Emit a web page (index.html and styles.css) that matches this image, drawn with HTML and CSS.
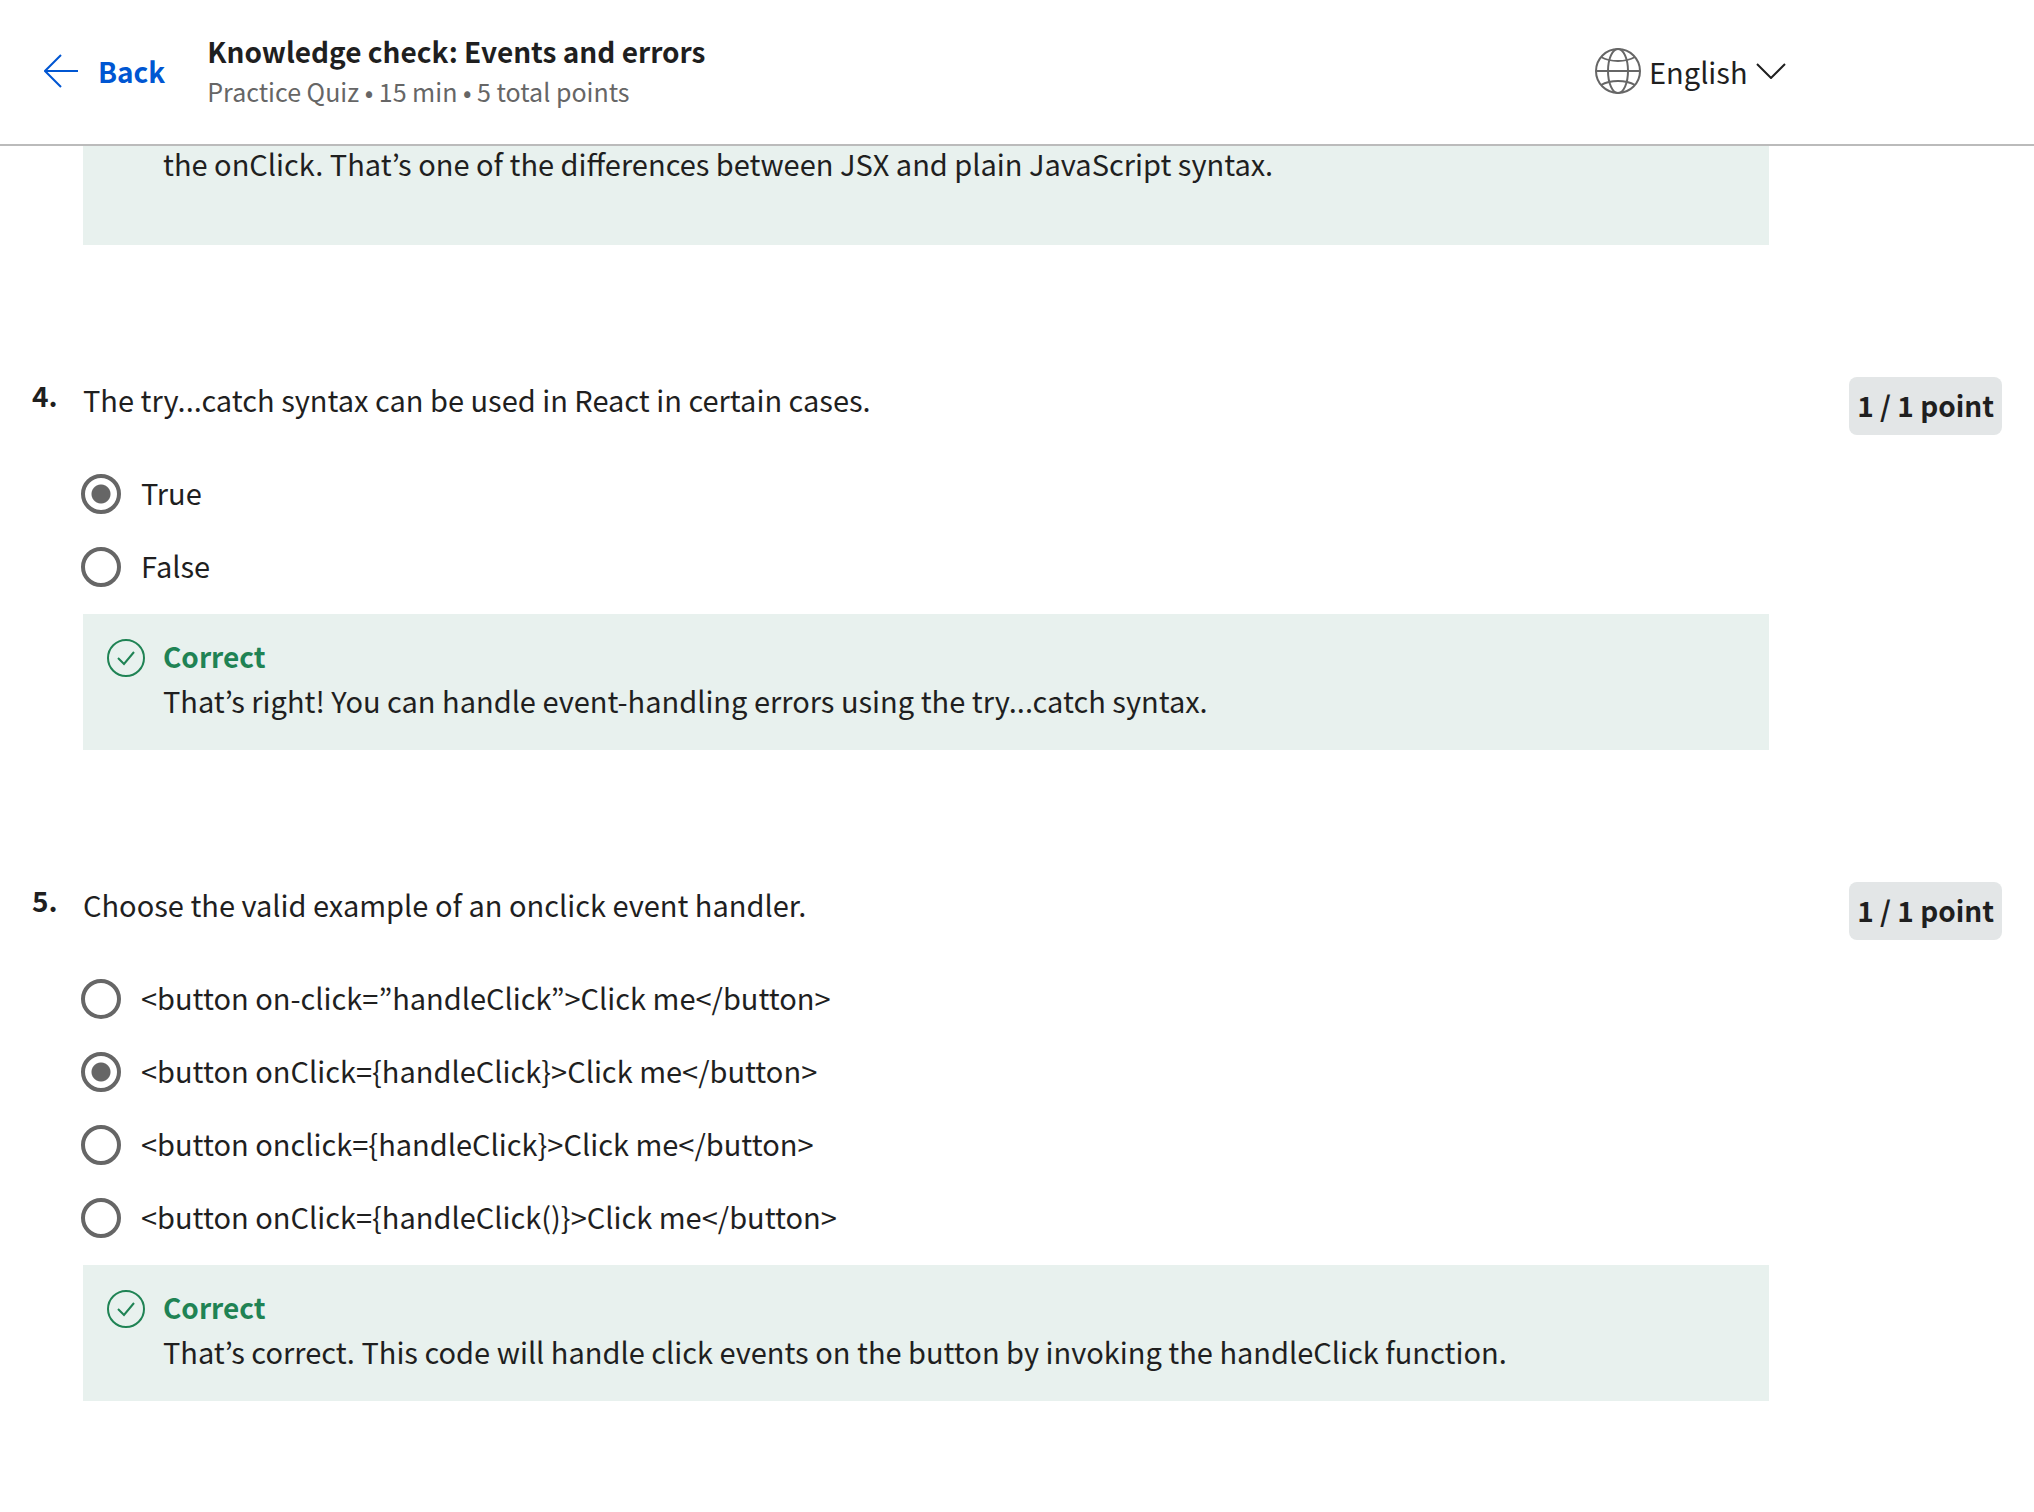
FILE: index.html
```html
<!DOCTYPE html>
<html lang="en">
<head>
<meta charset="utf-8">
<meta name="viewport" content="width=device-width, initial-scale=1">
<title>Knowledge check: Events and errors</title>
<link rel="stylesheet" href="styles.css">
</head>
<body>
<header class="topbar">
  <a class="back" href="#">
    <svg class="back-icon" viewBox="0 0 34 34" aria-hidden="true"><path d="M34 17H2M17 1 1 17l16 16"/></svg>
    Back
  </a>
  <div class="heading">
    <h1 class="title">Knowledge check: Events and errors</h1>
    <p class="meta">Practice Quiz • 15 min • 5 total points</p>
  </div>
  <label class="language">
    <svg class="globe" viewBox="0 0 46 46" aria-hidden="true"><circle cx="23" cy="23" r="22"/><ellipse cx="23" cy="23" rx="10" ry="22"/><path d="M1 23h44M6 9q7 4 17 4t17-4M6 37q7-4 17-4t17 4"/></svg>
    <select class="language-select" aria-label="Language"><option>English</option></select>
    <svg class="chevron" viewBox="0 0 30 16" aria-hidden="true"><path d="M1 1l14 14L29 1"/></svg>
  </label>
</header>
<main class="quiz">
  <section class="question question-previous">
    <div class="feedback feedback-long">
      <p class="feedback-text">the onClick. That’s one of the differences between JSX and plain JavaScript syntax.</p>
    </div>
  </section>

  <section class="question">
    <span class="number">4.</span>
    <p class="prompt" id="q4">The try...catch syntax can be used in React in certain cases.</p>
    <span class="points">1 / 1 point</span>
    <div class="options" role="radiogroup" aria-labelledby="q4">
      <label class="option"><input class="radio" type="radio" name="q4" checked><span class="option-text">True</span></label>
      <label class="option"><input class="radio" type="radio" name="q4"><span class="option-text">False</span></label>
    </div>
    <div class="feedback">
      <svg class="check" viewBox="0 0 38 38" aria-hidden="true"><circle cx="19" cy="19" r="18"/><path d="M11 19l6 6 10-12"/></svg>
      <div>
        <h2 class="feedback-title">Correct</h2>
        <p class="feedback-text">That’s right! You can handle event-handling errors using the try...catch syntax.</p>
      </div>
    </div>
  </section>

  <section class="question">
    <span class="number">5.</span>
    <p class="prompt" id="q5">Choose the valid example of an onclick event handler.</p>
    <span class="points">1 / 1 point</span>
    <div class="options" role="radiogroup" aria-labelledby="q5">
      <label class="option"><input class="radio" type="radio" name="q5"><span class="option-text">&lt;button on-click=”handleClick”&gt;Click me&lt;/button&gt;</span></label>
      <label class="option"><input class="radio" type="radio" name="q5" checked><span class="option-text">&lt;button onClick={handleClick}&gt;Click me&lt;/button&gt;</span></label>
      <label class="option"><input class="radio" type="radio" name="q5"><span class="option-text">&lt;button onclick={handleClick}&gt;Click me&lt;/button&gt;</span></label>
      <label class="option"><input class="radio" type="radio" name="q5"><span class="option-text">&lt;button onClick={handleClick()}&gt;Click me&lt;/button&gt;</span></label>
    </div>
    <div class="feedback">
      <svg class="check" viewBox="0 0 38 38" aria-hidden="true"><circle cx="19" cy="19" r="18"/><path d="M11 19l6 6 10-12"/></svg>
      <div>
        <h2 class="feedback-title">Correct</h2>
        <p class="feedback-text">That’s correct. This code will handle click events on the button by invoking the handleClick function.</p>
      </div>
    </div>
  </section>
</main>
</body>
</html>
```
FILE: styles.css
```css
* {
  box-sizing: border-box;
}

body {
  margin: 0;
  background: #fff;
  color: #1f1f1f;
  font-family: "Noto Sans CJK KR", "Noto Sans", sans-serif;
  font-size: 29px;
  line-height: 44px;
}

h1, h2, p {
  margin: 0;
  font-size: inherit;
}

svg {
  display: block;
  flex: none;
  fill: none;
  stroke: currentColor;
  stroke-width: 2;
}

.back, .title, .number, .points, .feedback-title {
  font-size: 28px;
  font-weight: 700;
}

/* Top bar */
.topbar {
  position: sticky;
  top: 0;
  z-index: 1;
  display: flex;
  align-items: center;
  padding: 31px 248px 33px 44px;
  border-bottom: 2px solid #bbb;
  background: #fff;
}

.back {
  display: flex;
  align-items: center;
  gap: 20px;
  margin-right: 42px;
  color: #0056d2;
  text-decoration: none;
}

.back-icon {
  width: 34px;
  height: 34px;
}

.title, .meta {
  line-height: 40px;
}

.meta {
  color: #666;
  font-size: 25px;
}

.language {
  display: flex;
  align-items: center;
  gap: 8px;
  margin-left: auto;
}

.language-select {
  appearance: none;
  padding: 0;
  border: 0;
  background: none;
  color: inherit;
  font: inherit;
}

.globe {
  width: 46px;
  height: 46px;
  color: #666;
}

.chevron {
  width: 30px;
  height: 16px;
}

/* Questions */
.quiz {
  padding: 0 32px 64px;
}

.question {
  display: grid;
  grid-template-columns: 51px 1fr 233px;
  align-items: start;
  margin-bottom: 128px;
}

.question:last-child {
  margin-bottom: 0;
}

/* The previous answer runs on underneath the top bar */
.question-previous {
  margin-top: -5px;
}

.prompt {
  margin-top: 4px;
}

.points {
  justify-self: end;
  margin-top: 4px;
  padding: 6px 8px 8px;
  border-radius: 8px;
  background: #e3e6e7;
}

.options {
  grid-column: 2;
  margin: 22px 0 11px;
}

.option {
  display: flex;
  align-items: center;
  gap: 20px;
  height: 73px;
}

.option-text {
  padding-bottom: 4px;
}

.radio {
  appearance: none;
  flex: none;
  width: 40px;
  height: 40px;
  margin: 0 0 0 -2px;
  border: 4px solid #666;
  border-radius: 50%;
}

.radio:checked {
  background: radial-gradient(circle, #666 9px, transparent 10px);
}

.feedback {
  grid-column: 2;
  display: flex;
  gap: 18px;
  padding: 20px 24px 28px;
  background: #e8f1ee;
}

.feedback-long {
  padding: 0 24px 60px 80px;
}

.feedback-title {
  color: #1f8354;
}

.check {
  width: 38px;
  height: 38px;
  margin-top: 5px;
}

.check {
  color: #1f8354;
}
```
